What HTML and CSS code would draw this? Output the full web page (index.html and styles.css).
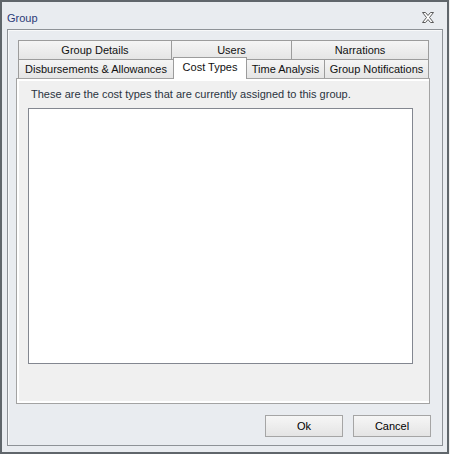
FILE: index.html
```html
<!DOCTYPE html>
<html lang="en">
<head>
    <meta charset="UTF-8">
    <title>Group</title>
    <link rel="stylesheet" href="styles.css">
</head>
<body>

<div class="window">
    <div class="titlebar">
        <span class="title">Group</span>
        <svg class="close" width="12" height="11" viewBox="0 0 12 11">
            <path d="M0.5,0.5 H3.5 L6,3.5 L8.5,0.5 H11.5 L7.5,5.5 L11.5,10.5 H8.5 L6,7.5 L3.5,10.5 H0.5 L4.5,5.5 Z" fill="#fff" stroke="#5a5a5a" stroke-width="1"/>
        </svg>
    </div>

    <div class="groupbox">
        <div class="tabs">
            <div class="tab-row">
                <div class="tab" style="width: 154px">Group Details</div>
                <div class="tab" style="width: 121px">Users</div>
                <div class="tab" style="width: 138px">Narrations</div>
            </div>
            <div class="tab-row">
                <div class="tab" style="width: 156px">Disbursements &amp; Allowances</div>
                <div class="tab selected" style="width: 74px">Cost Types</div>
                <div class="tab" style="width: 79px">Time Analysis</div>
                <div class="tab" style="width: 105px">Group Notifications</div>
            </div>
            <div class="tab-page">
                <p class="hint">These are the cost types that are currently assigned to this group.</p>
                <div class="listbox"></div>
            </div>
        </div>

        <div class="buttons">
            <button>Ok</button>
            <button>Cancel</button>
        </div>
    </div>
</div>

</body>
</html>
```

FILE: styles.css
```css
body {
    margin: 0;
    font-family: "Liberation Sans", Arial, sans-serif;
    font-size: 11px;
    background: #f0f0f0;
}
.window {
    width: 449px;
    height: 454px;
    box-sizing: border-box;
    border: 2px solid #60666b;
    background: #e9ecf0;
    display: flex;
    flex-direction: column;
}
.titlebar {
    height: 27px;
    box-sizing: border-box;
    padding: 6px 13px 0 5px;
    display: flex;
    align-items: center;
    justify-content: space-between;
}
.title {
    color: #2b3b78;
    line-height: 13px;
}
.close {
    display: block;
    margin-top: -3px;
}
.groupbox {
    flex: 1;
    margin: 0 4px 6px 5px;
    padding: 10px 12px 0 8px;
    border: 1px solid #8e9297;
    box-shadow: inset 1px 1px 0 #f8f9fa;
    display: flex;
    flex-direction: column;
}
.tab-row {
    display: flex;
    height: 19px;
    margin-left: 2px;
}
.tab {
    box-sizing: border-box;
    height: 19px;
    border: 1px solid #9c9c9c;
    border-bottom: none;
    background: linear-gradient(#f5f5f5, #e5e5e5);
    color: #111;
    line-height: 18px;
    text-align: center;
    white-space: nowrap;
}
.tab + .tab {
    margin-left: -1px;
}
.tab.selected {
    position: relative;
    z-index: 2;
    height: 22px;
    margin-top: -2px;
    background: #fff;
}
.tab-page {
    height: 326px;
    box-sizing: border-box;
    padding: 9px 0 0 11px;
    border: 1px solid #a3a3a3;
    background: #f0f0f0;
    box-shadow: inset 2px 2px 0 #fff, inset 0 -2px 0 #fff;
}
.hint {
    margin: 0;
    padding-left: 3px;
    line-height: 13px;
    color: #2a3340;
}
.listbox {
    width: 385px;
    height: 256px;
    box-sizing: border-box;
    margin-top: 7px;
    border: 1px solid #838790;
    background: #fff;
}
.buttons {
    display: flex;
    justify-content: flex-end;
    gap: 10px;
    margin: 11px -1px 0 0;
}
button {
    width: 78px;
    height: 22px;
    padding: 0;
    border: 1px solid #a5a5a5;
    background: linear-gradient(#f6f6f6, #e4e4e4);
    font-family: "Liberation Sans", Arial, sans-serif;
    font-size: 11px;
    color: #000;
}
```
